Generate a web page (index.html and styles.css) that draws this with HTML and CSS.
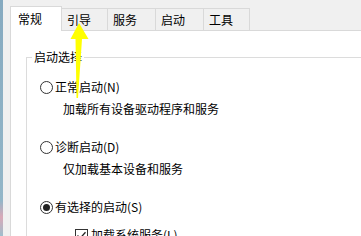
FILE: index.html
```html
<!DOCTYPE html>
<html lang="zh-CN">
<head>
    <meta charset="UTF-8">
    <meta name="viewport" content="width=device-width, initial-scale=1.0">
    <title>系统配置</title>
    <link rel="stylesheet" href="styles.css">
</head>
<body>
    <div class="window">
        <div class="desktop-edge"></div>
        <div class="dialog">
            <div class="tabs">
                <div class="tab active">常规</div>
                <div class="tab tab-narrow">引导</div>
                <div class="tab tab-wide">服务</div>
                <div class="tab tab-wide">启动</div>
                <div class="tab tab-narrow">工具</div>
            </div>
            <div class="panel">
                <div class="group">
                    <div class="group-title">启动选择</div>
                    <div class="options">
                        <div class="option">
                            <span class="radio"></span>
                            <span>正常启动(N)</span>
                        </div>
                        <div class="desc">加载所有设备驱动程序和服务</div>

                        <div class="option spaced">
                            <span class="radio"></span>
                            <span>诊断启动(D)</span>
                        </div>
                        <div class="desc">仅加载基本设备和服务</div>

                        <div class="option spaced">
                            <span class="radio checked"></span>
                            <span>有选择的启动(S)</span>
                        </div>
                        <div class="sub-option">
                            <span class="checkbox">
                                <svg width="11" height="11" viewBox="0 0 11 11"><path d="M1.5 5.5 L4.2 8.2 L9.5 2.2" fill="none" stroke="#222" stroke-width="1.3"/></svg>
                            </span>
                            <span>加载系统服务(L)</span>
                        </div>
                    </div>
                </div>
            </div>
        </div>
    </div>

    <!-- yellow pointer drawn over the screenshot -->
    <svg class="pointer" width="361" height="236" viewBox="0 0 361 236">
        <polygon points="79,23 88.5,39 82,39 78,98 76.5,98 75.5,39 70.5,39" fill="#ffff00"/>
    </svg>
</body>
</html>
```

FILE: styles.css
```css
:root {
    --bg-color: #f0f0f0;
    --border-color: #d9d9d9;
    --text-color: #000;
}

body {
    margin: 0;
    padding: 0;
    width: 361px;
    height: 236px;
    overflow: hidden;
    background-color: var(--bg-color);
    color: var(--text-color);
    font-family: "Noto Sans CJK SC", "Microsoft YaHei", sans-serif;
    font-size: 12px;
    line-height: 16px;
}

.window {
    display: flex;
    height: 236px;
}

.desktop-edge {
    width: 3px;
    flex-shrink: 0;
    background: linear-gradient(#86aac0, #93b6c8 85%, #d9a9b8 92%, #9fbecd);
}

.dialog {
    flex: 1;
    display: flex;
    flex-direction: column;
    padding: 6px 0 0 7px;
}

.tabs {
    display: flex;
    align-items: flex-end;
}

.tab {
    box-sizing: border-box;
    height: 22px;
    padding: 3px 0 0 5px;
    border-top: 1px solid var(--border-color);
    border-right: 1px solid var(--border-color);
    background-color: var(--bg-color);
    white-space: nowrap;
}

.tab-narrow {
    width: 46px;
}

.tab-wide {
    width: 48px;
}

.tab.active {
    position: relative;
    z-index: 1;
    width: 52px;
    height: 25px;
    margin-bottom: -1px;
    padding: 4px 0 0 7px;
    border-left: 1px solid var(--border-color);
    background-color: #fff;
}

.panel {
    flex: 1;
    background-color: #fff;
    border-top: 1px solid var(--border-color);
    border-left: 1px solid var(--border-color);
    padding: 26px 0 0 15px;
}

.group {
    border: 1px solid #dcdcdc;
    border-right: none;
    height: 300px;
}

.group-title {
    width: fit-content;
    margin: -9px 0 0 5px;
    padding: 0 2px;
    background-color: #fff;
}

.options {
    padding: 14px 0 0 13px;
}

.option {
    display: flex;
    align-items: center;
    gap: 2px;
    height: 16px;
}

.option.spaced {
    margin-top: 22px;
}

.radio {
    box-sizing: border-box;
    width: 13px;
    height: 13px;
    border: 1px solid #333;
    border-radius: 50%;
    display: flex;
    justify-content: center;
    align-items: center;
}

.radio.checked::after {
    content: "";
    width: 7px;
    height: 7px;
    border-radius: 50%;
    background-color: #222;
}

.desc {
    margin-top: 6px;
    padding-left: 23px;
}

.sub-option {
    display: flex;
    align-items: center;
    gap: 3px;
    margin-top: 12px;
    padding-left: 35px;
    height: 16px;
}

.checkbox {
    box-sizing: border-box;
    width: 13px;
    height: 13px;
    border: 1px solid #333;
    display: flex;
    justify-content: center;
    align-items: center;
}

.pointer {
    position: absolute;
    top: 0;
    left: 0;
    pointer-events: none;
}
```
